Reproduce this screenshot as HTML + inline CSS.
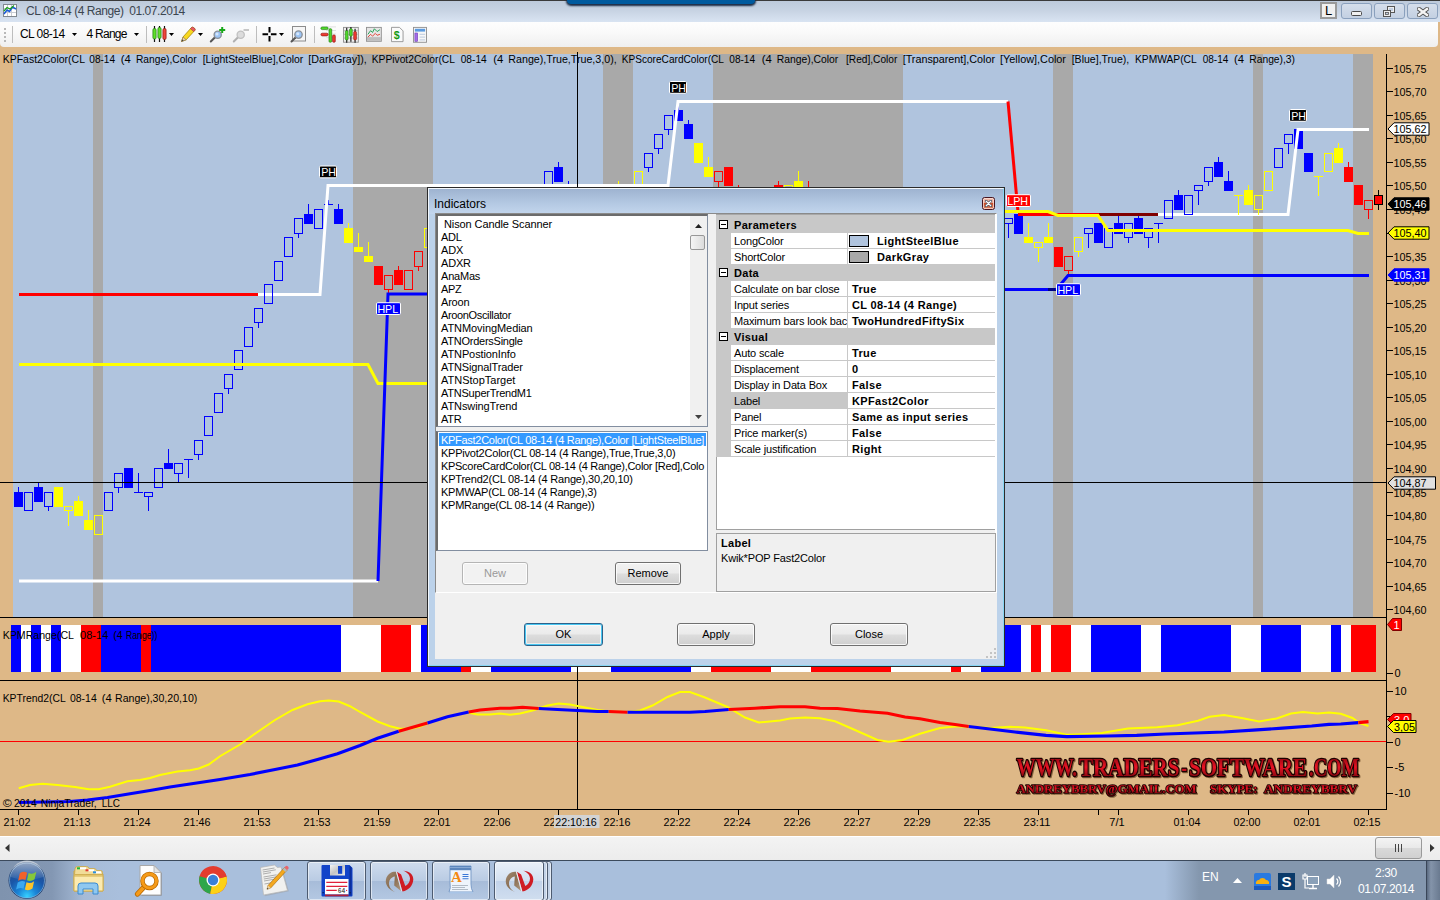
<!DOCTYPE html>
<html><head><meta charset="utf-8"><title>CL 08-14 (4 Range)</title>
<style>
html,body{margin:0;padding:0;overflow:hidden;}
body{width:1440px;height:900px;overflow:hidden;position:relative;background:#DEB887;font-family:"Liberation Sans",sans-serif;font-size:11px;color:#000;}
.abs{position:absolute;}
#titlebar{left:0;top:0;width:1440px;height:22px;background:linear-gradient(#bdcadb 0,#c7d3e3 45%,#d9e4f2 100%);border-top:1px solid #3a3a3a;box-sizing:border-box;}
#titlebar .t{position:absolute;left:26px;top:3px;font-size:12px;line-height:14px;color:#3c4650;white-space:pre;letter-spacing:-0.45px;}
#toolbar{left:0;top:22px;width:1438px;height:25px;background:linear-gradient(#fefefe 0,#f9f9f9 45%,#efefef 100%);border-radius:0 0 4px 4px;}
.tb{position:absolute;top:0;font-size:12px;line-height:24px;white-space:pre;}
.wb{position:absolute;top:1.500px;height:16.500px;border:1px solid #8aa0bd;border-radius:3px;background:linear-gradient(#d5deeb,#c3d0e2);box-sizing:border-box;}
/* dialog */
#dlg{left:427px;top:187px;width:578px;height:480px;box-sizing:border-box;border:1px solid #2b2b2b;background:#bcd2ea;}
#dlg .fr{position:absolute;left:0;top:0;right:0;height:26px;background:linear-gradient(#9db2cf 0,#b4c9e3 60%,#c3d6ed 100%);}
#dlg .title{position:absolute;left:6px;top:9px;font-size:12px;color:#000;}
#cl{position:absolute;left:7px;top:26px;width:562px;height:446px;background:#F0F0F0;}
.lb{position:absolute;background:#fff;border:1px solid #828790;box-sizing:border-box;border-top-color:#6d6d6d;border-left-color:#6d6d6d;}
.li{position:absolute;left:4px;white-space:pre;font-size:11px;line-height:13px;height:13px;}
.btn{position:absolute;box-sizing:border-box;border:1px solid #707070;border-radius:3px;background:linear-gradient(#f2f2f2 0,#ebebeb 48%,#dddddd 52%,#cfcfcf 100%);text-align:center;font-size:11px;line-height:21px;box-shadow:inset 0 0 0 1px rgba(255,255,255,.8);}
.row{position:absolute;left:0;width:279px;height:16px;}
.pn{position:absolute;left:15px;top:0;width:116px;height:15px;background:#fff;line-height:17px;padding-left:3px;letter-spacing:-0.15px;box-sizing:border-box;white-space:pre;overflow:hidden;}
.pv{position:absolute;left:132px;top:0;width:147px;height:15px;background:#fff;line-height:17px;font-weight:bold;padding-left:4px;letter-spacing:0.35px;box-sizing:border-box;white-space:pre;overflow:hidden;}
.cat{position:absolute;left:15px;top:0;line-height:17px;font-weight:bold;padding-left:3px;letter-spacing:0.3px;}
.pm{position:absolute;left:3px;top:3px;width:9px;height:9px;box-sizing:border-box;border:1px solid #000;background:#fff;}
.pm:after{content:"";position:absolute;left:1px;top:3px;width:5px;height:1px;background:#000;}
.sw{position:absolute;left:1px;top:2px;width:20px;height:12px;box-sizing:border-box;border:1px solid #000;}
#task{left:0;top:860px;width:1440px;height:40px;background:linear-gradient(90deg,#7f93ae 0,#8397b3 52px,#a6bbd7 84px,#a9bfdc 120px,#a9bfdc 100%);border-top:1px solid #3c4a5c;box-sizing:border-box;}
.tbtn{position:absolute;top:0px;height:40px;box-sizing:border-box;border:1px solid #4d5b70;border-radius:3px;background:linear-gradient(#cfdcee 0,#b9cbe3 50%,#a7bcd9 51%,#b4c8e2 100%);box-shadow:inset 0 0 0 1px rgba(255,255,255,.55);}
</style></head><body>
<div id="titlebar" class="abs">
<svg class="abs" style="left:3px;top:3px" width="15" height="14" viewBox="0 0 15 14"><rect x="0.5" y="0.5" width="13" height="12" fill="#fff" stroke="#808890"/><path d="M1 4.500h12M1 8.500h12M4.500 1v11M8.500 1v11" stroke="#c8ccd4" stroke-width="1"/><path d="M1 10 L4 6 L6.500 7.500 L9.500 3 L13 5" fill="none" stroke="#1a5ad8" stroke-width="1.500"/><path d="M1 7 L4 3.500 L7 5 L11 1.500" fill="none" stroke="#1aa01a" stroke-width="1.200"/></svg>
<div class="t">CL 08-14 (4 Range)  01.07.2014</div>
<div class="abs" style="left:567px;top:-1px;width:188px;height:4px;background:#005a9e;border-radius:0 0 4px 4px;box-shadow:0 1px 2px 1px #1a2a44;"></div>
<div class="abs" style="left:1320px;top:1px;width:17px;height:17px;box-sizing:border-box;border:2px solid #9a9a9a;background:#f0f0f0;font-size:13px;line-height:13px;text-align:center;">L</div>
<div class="wb" style="left:1341px;width:31px;"><div class="abs" style="left:9px;top:7.500px;width:11px;height:4.500px;border:1px solid #4a4a4a;background:#f0f0f0;border-radius:1.500px;box-sizing:border-box"></div></div>
<div class="wb" style="left:1374px;width:31px;"><svg class="abs" style="left:8px;top:2px" width="13" height="11" viewBox="0 0 13 11"><rect x="4.5" y="0.5" width="7" height="6" fill="#eee" stroke="#555"/><rect x="6" y="2" width="4" height="3" fill="#c3d0e2" stroke="none"/><rect x="0.5" y="4.5" width="7" height="6" fill="#eee" stroke="#555"/><rect x="2.5" y="6.5" width="3" height="2" fill="#c3d0e2" stroke="#555" stroke-width=".8"/></svg></div>
<div class="wb" style="left:1407px;width:31px;"><svg class="abs" style="left:9px;top:3px" width="12" height="10" viewBox="0 0 12 10"><path d="M2 2 L10 8 M10 2 L2 8" stroke="#505050" stroke-width="4.200" stroke-linecap="square"/><path d="M2 2 L10 8 M10 2 L2 8" stroke="#f4f4f4" stroke-width="2.400" stroke-linecap="square"/></svg></div>
</div>
<div id="toolbar" class="abs">
<div class="abs" style="left:4px;top:6px;width:2px;height:14px;background:repeating-linear-gradient(#b8b8b8 0,#b8b8b8 2px,transparent 2px,transparent 4px)"></div>
<div class="abs" style="left:12px;top:4px;width:1px;height:17px;background:#bdbdbd"></div>
<div class="tb" style="left:20px;letter-spacing:-0.55px">CL 08-14</div>
<svg class="abs" style="left:72px;top:11px" width="5" height="3"><path d="M0 0h5l-2.500 3z" fill="#000"/></svg>
<div class="tb" style="left:86.500px;letter-spacing:-0.73px">4 Range</div>
<svg class="abs" style="left:134.300px;top:11px" width="5" height="3"><path d="M0 0h5l-2.500 3z" fill="#000"/></svg>
<div class="abs" style="left:146px;top:4px;width:1px;height:17px;background:#bdbdbd"></div>
<!-- candle icon -->
<svg class="abs" style="left:152px;top:4px" width="15" height="16" viewBox="0 0 15 16"><path d="M2.500 0v16M7.500 0v16M12.500 0v16" stroke="#111" stroke-width="1.200"/><rect x="0.900" y="2.500" width="3.200" height="10.500" rx="1.400" fill="#5fe02a" stroke="#1e7a10" stroke-width=".7"/><rect x="5.900" y="1.500" width="3.200" height="11" rx="1.400" fill="#5fe02a" stroke="#1e7a10" stroke-width=".7"/><rect x="10.900" y="2.500" width="3.200" height="11" rx="1.400" fill="#f0463a" stroke="#8a1510" stroke-width=".7"/></svg>
<svg class="abs" style="left:169px;top:11px" width="5" height="3"><path d="M0 0h5l-2.500 3z" fill="#000"/></svg>
<!-- pencil -->
<svg class="abs" style="left:180px;top:4px" width="17" height="17" viewBox="0 0 17 17"><path d="M1.500 15.500 L3 11 L11.500 1.500 Q12.500 0.800 13.500 1.500 L14.800 2.600 Q15.500 3.500 14.800 4.400 L6.200 13.800 Z" fill="#f8d820" stroke="#9a7a00" stroke-width=".7"/><path d="M11.500 1.500 Q12.500 0.800 13.500 1.500 L14.800 2.600 Q15.500 3.500 14.800 4.400 L13.700 5.600 L10.400 2.700Z" fill="#e85a60" stroke="#903038" stroke-width=".5"/><path d="M1.500 15.500 L3 11 L6.200 13.800Z" fill="#e8d0a8" stroke="#806848" stroke-width=".5"/><path d="M1.500 15.500 L2.200 13.300 L3.700 14.700Z" fill="#444"/></svg>
<svg class="abs" style="left:198px;top:11px" width="5" height="3"><path d="M0 0h5l-2.500 3z" fill="#000"/></svg>
<!-- zoom in -->
<svg class="abs" style="left:209px;top:3px" width="20" height="20" viewBox="0 0 20 20"><path d="M1.800 16.500 L5.800 12.500" stroke="#555" stroke-width="2" stroke-linecap="round"/><circle cx="8.700" cy="9.800" r="3.600" fill="#9cc4f4" stroke="#8a9098" stroke-width="1.300"/><circle cx="8" cy="9" r="1.500" fill="#d4e6fb"/><path d="M13.200 2v6M10.200 5h6" stroke="#18a818" stroke-width="2"/></svg>
<svg class="abs" style="left:232px;top:3px" width="20" height="20" viewBox="0 0 20 20"><path d="M1.800 16.500 L5.800 12.500" stroke="#b0b0b0" stroke-width="2" stroke-linecap="round"/><circle cx="8.700" cy="9.800" r="3.600" fill="#dcdcdc" stroke="#c0c0c0" stroke-width="1.300"/><path d="M11.500 5h5.500" stroke="#c0c0c0" stroke-width="1.800"/></svg>
<div class="abs" style="left:256px;top:4px;width:1px;height:17px;background:#bdbdbd"></div>
<!-- crosshair -->
<svg class="abs" style="left:261.500px;top:5px" width="15" height="15" viewBox="0 0 15 15"><path d="M7.500 0v5.600M7.500 9v5.600M0.500 7.300h5.600M8.900 7.300h5.600" stroke="#000" stroke-width="2"/></svg>
<svg class="abs" style="left:279px;top:11px" width="5" height="3"><path d="M0 0h5l-2.500 3z" fill="#000"/></svg>
<svg class="abs" style="left:290px;top:3px" width="18" height="19" viewBox="0 0 18 19"><rect x="2.500" y="1.500" width="13" height="14.500" fill="#f6f6f6" stroke="#8c8c8c"/><path d="M1.500 16.500 L5.500 12.500" stroke="#555" stroke-width="2" stroke-linecap="round"/><circle cx="8.500" cy="9.600" r="3.700" fill="#9cc4f4" stroke="#8a9098" stroke-width="1.300"/><circle cx="7.800" cy="8.800" r="1.500" fill="#d4e6fb"/></svg>
<div class="abs" style="left:314px;top:4px;width:1px;height:17px;background:#bdbdbd"></div>
<svg class="abs" style="left:319.500px;top:3.500px" width="16.200" height="17.100" viewBox="0 0 18 19"><path d="M7 1h11M7 5h11M7 9h11M7 13h11" stroke="#ddd"/><rect x="1" y="1" width="8" height="3" rx="1.5" fill="#4fd62a" stroke="#1e7a10" stroke-width=".7"/><rect x="1" y="8" width="8" height="3" rx="1.5" fill="#ee3a30" stroke="#8a1510" stroke-width=".7"/><rect x="10" y="3" width="3" height="15" rx="1" fill="#4fd62a" stroke="#1e7a10" stroke-width=".7"/><rect x="14" y="10" width="3" height="8" rx="1" fill="#ee3a30" stroke="#8a1510" stroke-width=".7"/></svg>
<svg class="abs" style="left:343px;top:3.500px" width="15.800" height="17.600" viewBox="0 0 17 19"><rect x="0.5" y="1.5" width="16" height="16" fill="#f0f0f0" stroke="#909090"/><path d="M1 5h15M1 9h15M1 13h15" stroke="#bbb"/><path d="M4 2v16M8.500 1v16M13 3v15" stroke="#111" stroke-width="1.2"/><rect x="2.5" y="5" width="3" height="10" rx="1" fill="#4fd62a" stroke="#1e7a10" stroke-width=".6"/><rect x="7" y="3" width="3" height="8" rx="1" fill="#4fd62a" stroke="#1e7a10" stroke-width=".6"/><rect x="11.500" y="6" width="3" height="9" rx="1" fill="#ee3a30" stroke="#8a1510" stroke-width=".6"/></svg>
<svg class="abs" style="left:366px;top:3.500px" width="15.800" height="17.600" viewBox="0 0 17 19"><rect x="0.5" y="1.5" width="16" height="15" fill="#e6e6e6" stroke="#909090"/><rect x="1" y="12" width="15" height="4" fill="#bdbdbd"/><path d="M2 9 L5 5 L7 7 L9 3 L12 6 L15 4" fill="none" stroke="#1aa050" stroke-width="1"/><path d="M2 12 L5 9 L7 11 L10 8 L12 10 L15 9" fill="none" stroke="#e03a30" stroke-width="1"/></svg>
<svg class="abs" style="left:391px;top:4px" width="12.500" height="17" viewBox="0 0 14 19"><path d="M0.5 1.500h9l4 4v12h-13z" fill="#fafafa" stroke="#909090"/><text x="6.5" y="14" font-size="12" font-weight="bold" fill="#149a14" text-anchor="middle" font-family="Liberation Sans, sans-serif">$</text></svg>
<svg class="abs" style="left:413px;top:3.500px" width="14" height="17.700" viewBox="0 0 15 19"><rect x="0.5" y="1.5" width="14" height="16" fill="#f7f7f7" stroke="#909090"/><rect x="2" y="3" width="11" height="3" fill="#5b9be0"/><rect x="2" y="7.500" width="3" height="9" fill="#a46be8" stroke="#6a3ab0" stroke-width=".6"/><path d="M7 9h6M7 12h6M7 15h6" stroke="#c8d4e4" stroke-width="1.4"/></svg>
</div>
<svg id="chart" width="1440" height="900" viewBox="0 0 1440 900" style="position:absolute;left:0;top:0">
<g shape-rendering="crispEdges">
<rect x="13" y="54" width="1360" height="563" fill="#B0C4DE"/>
<rect x="93" y="54" width="10" height="563" fill="#A9A9A9"/>
<rect x="353" y="54" width="80" height="563" fill="#A9A9A9"/>
<rect x="603" y="54" width="30" height="563" fill="#A9A9A9"/>
<rect x="713" y="54" width="190" height="563" fill="#A9A9A9"/>
<rect x="1053" y="54" width="20" height="563" fill="#A9A9A9"/>
<rect x="1253" y="54" width="10" height="563" fill="#A9A9A9"/>
<rect x="1353" y="54" width="20" height="563" fill="#A9A9A9"/>
<rect x="0" y="617" width="1386" height="1" fill="#000"/>
<rect x="0" y="680" width="1386" height="1" fill="#000"/>
<rect x="0" y="809" width="1386" height="1" fill="#000"/>
<rect x="1386" y="54" width="1" height="756" fill="#000"/>
</g>
<g shape-rendering="crispEdges">
<rect x="11" y="625" width="10" height="47" fill="#0000FF"/>
<rect x="21" y="625" width="10" height="47" fill="#FFFFFF"/>
<rect x="31" y="625" width="10" height="47" fill="#0000FF"/>
<rect x="41" y="625" width="10" height="47" fill="#FFFFFF"/>
<rect x="51" y="625" width="10" height="47" fill="#0000FF"/>
<rect x="61" y="625" width="20" height="47" fill="#FFFFFF"/>
<rect x="81" y="625" width="20" height="47" fill="#FF0000"/>
<rect x="101" y="625" width="40" height="47" fill="#0000FF"/>
<rect x="141" y="625" width="10" height="47" fill="#FF0000"/>
<rect x="151" y="625" width="190" height="47" fill="#0000FF"/>
<rect x="341" y="625" width="40" height="47" fill="#FFFFFF"/>
<rect x="381" y="625" width="30" height="47" fill="#FF0000"/>
<rect x="411" y="625" width="10" height="47" fill="#FFFFFF"/>
<rect x="421" y="625" width="40" height="47" fill="#0000FF"/>
<rect x="461" y="625" width="10" height="47" fill="#FF0000"/>
<rect x="471" y="625" width="20" height="47" fill="#FFFFFF"/>
<rect x="491" y="625" width="80" height="47" fill="#0000FF"/>
<rect x="571" y="625" width="40" height="47" fill="#FFFFFF"/>
<rect x="611" y="625" width="80" height="47" fill="#0000FF"/>
<rect x="691" y="625" width="20" height="47" fill="#FFFFFF"/>
<rect x="711" y="625" width="60" height="47" fill="#FF0000"/>
<rect x="771" y="625" width="40" height="47" fill="#FFFFFF"/>
<rect x="811" y="625" width="80" height="47" fill="#FF0000"/>
<rect x="891" y="625" width="60" height="47" fill="#FFFFFF"/>
<rect x="951" y="625" width="10" height="47" fill="#FF0000"/>
<rect x="961" y="625" width="20" height="47" fill="#FFFFFF"/>
<rect x="981" y="625" width="40" height="47" fill="#0000FF"/>
<rect x="1021" y="625" width="10" height="47" fill="#FFFFFF"/>
<rect x="1031" y="625" width="10" height="47" fill="#FF0000"/>
<rect x="1041" y="625" width="10" height="47" fill="#FFFFFF"/>
<rect x="1051" y="625" width="20" height="47" fill="#FF0000"/>
<rect x="1071" y="625" width="20" height="47" fill="#FFFFFF"/>
<rect x="1091" y="625" width="50" height="47" fill="#0000FF"/>
<rect x="1141" y="625" width="20" height="47" fill="#FFFFFF"/>
<rect x="1161" y="625" width="70" height="47" fill="#0000FF"/>
<rect x="1231" y="625" width="30" height="47" fill="#FFFFFF"/>
<rect x="1261" y="625" width="40" height="47" fill="#0000FF"/>
<rect x="1301" y="625" width="30" height="47" fill="#FFFFFF"/>
<rect x="1331" y="625" width="10" height="47" fill="#0000FF"/>
<rect x="1341" y="625" width="10" height="47" fill="#FFFFFF"/>
<rect x="1351" y="625" width="25" height="47" fill="#FF0000"/>
</g>
<polyline points="19,294.5 258,294.5" fill="none" stroke="#FF0000" stroke-width="3" stroke-linejoin="miter" />
<polyline points="258,294.5 320.6,294.5" fill="none" stroke="#FFFFFF" stroke-width="3" stroke-linejoin="miter" />
<polyline points="19,581 378,581" fill="none" stroke="#FFFFFF" stroke-width="3" stroke-linejoin="miter" />
<polyline points="1158,214.5 1288.5,214.5" fill="none" stroke="#FFFFFF" stroke-width="3" stroke-linejoin="miter" />
<g shape-rendering="crispEdges">
<rect x="18" y="487" width="1" height="5" fill="#0000FF"/>
<rect x="14" y="492" width="9" height="15" fill="#0000FF"/>
<rect x="24" y="492" width="9" height="1" fill="#0000FF"/>
<rect x="24" y="510" width="9" height="1" fill="#0000FF"/>
<rect x="24" y="492" width="1" height="19" fill="#0000FF"/>
<rect x="32" y="492" width="1" height="19" fill="#0000FF"/>
<rect x="38" y="482" width="1" height="5" fill="#0000FF"/>
<rect x="34" y="487" width="9" height="15" fill="#0000FF"/>
<rect x="48" y="507" width="1" height="4" fill="#0000FF"/>
<rect x="44" y="492" width="9" height="1" fill="#0000FF"/>
<rect x="44" y="506" width="9" height="1" fill="#0000FF"/>
<rect x="44" y="492" width="1" height="15" fill="#0000FF"/>
<rect x="52" y="492" width="1" height="15" fill="#0000FF"/>
<rect x="54" y="487" width="9" height="20" fill="#FFFF00"/>
<rect x="68" y="511" width="1" height="15" fill="#FFFF00"/>
<rect x="64" y="506" width="9" height="1" fill="#FFFF00"/>
<rect x="64" y="510" width="9" height="1" fill="#FFFF00"/>
<rect x="64" y="506" width="1" height="5" fill="#FFFF00"/>
<rect x="72" y="506" width="1" height="5" fill="#FFFF00"/>
<rect x="78" y="496" width="1" height="5" fill="#FFFF00"/>
<rect x="74" y="501" width="9" height="15" fill="#FFFF00"/>
<rect x="88" y="510" width="1" height="10" fill="#FFFF00"/>
<rect x="84" y="520" width="9" height="10" fill="#FFFF00"/>
<rect x="94" y="515" width="9" height="1" fill="#FFFF00"/>
<rect x="94" y="534" width="9" height="1" fill="#FFFF00"/>
<rect x="94" y="515" width="1" height="20" fill="#FFFF00"/>
<rect x="102" y="515" width="1" height="20" fill="#FFFF00"/>
<rect x="104" y="492" width="9" height="1" fill="#0000FF"/>
<rect x="104" y="510" width="9" height="1" fill="#0000FF"/>
<rect x="104" y="492" width="1" height="19" fill="#0000FF"/>
<rect x="112" y="492" width="1" height="19" fill="#0000FF"/>
<rect x="118" y="488" width="1" height="5" fill="#0000FF"/>
<rect x="114" y="473" width="9" height="1" fill="#0000FF"/>
<rect x="114" y="487" width="9" height="1" fill="#0000FF"/>
<rect x="114" y="473" width="1" height="15" fill="#0000FF"/>
<rect x="122" y="473" width="1" height="15" fill="#0000FF"/>
<rect x="124" y="468" width="9" height="20" fill="#0000FF"/>
<rect x="138" y="473" width="1" height="19" fill="#0000FF"/>
<rect x="134" y="492" width="9" height="1" fill="#0000FF"/>
<rect x="148" y="497" width="1" height="14" fill="#0000FF"/>
<rect x="144" y="492" width="9" height="1" fill="#0000FF"/>
<rect x="144" y="496" width="9" height="1" fill="#0000FF"/>
<rect x="144" y="492" width="1" height="5" fill="#0000FF"/>
<rect x="152" y="492" width="1" height="5" fill="#0000FF"/>
<rect x="154" y="468" width="9" height="1" fill="#0000FF"/>
<rect x="154" y="487" width="9" height="1" fill="#0000FF"/>
<rect x="154" y="468" width="1" height="20" fill="#0000FF"/>
<rect x="162" y="468" width="1" height="20" fill="#0000FF"/>
<rect x="168" y="449" width="1" height="14" fill="#0000FF"/>
<rect x="164" y="463" width="9" height="6" fill="#0000FF"/>
<rect x="178" y="474" width="1" height="9" fill="#0000FF"/>
<rect x="174" y="463" width="9" height="1" fill="#0000FF"/>
<rect x="174" y="473" width="9" height="1" fill="#0000FF"/>
<rect x="174" y="463" width="1" height="11" fill="#0000FF"/>
<rect x="182" y="463" width="1" height="11" fill="#0000FF"/>
<rect x="188" y="460" width="1" height="18" fill="#0000FF"/>
<rect x="184" y="459" width="9" height="1" fill="#0000FF"/>
<rect x="198" y="455" width="1" height="5" fill="#0000FF"/>
<rect x="194" y="440" width="9" height="1" fill="#0000FF"/>
<rect x="194" y="454" width="9" height="1" fill="#0000FF"/>
<rect x="194" y="440" width="1" height="15" fill="#0000FF"/>
<rect x="202" y="440" width="1" height="15" fill="#0000FF"/>
<rect x="204" y="416" width="9" height="1" fill="#0000FF"/>
<rect x="204" y="435" width="9" height="1" fill="#0000FF"/>
<rect x="204" y="416" width="1" height="20" fill="#0000FF"/>
<rect x="212" y="416" width="1" height="20" fill="#0000FF"/>
<rect x="214" y="393" width="9" height="1" fill="#0000FF"/>
<rect x="214" y="412" width="9" height="1" fill="#0000FF"/>
<rect x="214" y="393" width="1" height="20" fill="#0000FF"/>
<rect x="222" y="393" width="1" height="20" fill="#0000FF"/>
<rect x="228" y="389" width="1" height="5" fill="#0000FF"/>
<rect x="224" y="374" width="9" height="1" fill="#0000FF"/>
<rect x="224" y="388" width="9" height="1" fill="#0000FF"/>
<rect x="224" y="374" width="1" height="15" fill="#0000FF"/>
<rect x="232" y="374" width="1" height="15" fill="#0000FF"/>
<rect x="234" y="350" width="9" height="1" fill="#0000FF"/>
<rect x="234" y="369" width="9" height="1" fill="#0000FF"/>
<rect x="234" y="350" width="1" height="20" fill="#0000FF"/>
<rect x="242" y="350" width="1" height="20" fill="#0000FF"/>
<rect x="244" y="327" width="9" height="1" fill="#0000FF"/>
<rect x="244" y="346" width="9" height="1" fill="#0000FF"/>
<rect x="244" y="327" width="1" height="20" fill="#0000FF"/>
<rect x="252" y="327" width="1" height="20" fill="#0000FF"/>
<rect x="258" y="323" width="1" height="5" fill="#0000FF"/>
<rect x="254" y="308" width="9" height="1" fill="#0000FF"/>
<rect x="254" y="322" width="9" height="1" fill="#0000FF"/>
<rect x="254" y="308" width="1" height="15" fill="#0000FF"/>
<rect x="262" y="308" width="1" height="15" fill="#0000FF"/>
<rect x="264" y="284" width="9" height="1" fill="#0000FF"/>
<rect x="264" y="303" width="9" height="1" fill="#0000FF"/>
<rect x="264" y="284" width="1" height="20" fill="#0000FF"/>
<rect x="272" y="284" width="1" height="20" fill="#0000FF"/>
<rect x="274" y="261" width="9" height="1" fill="#0000FF"/>
<rect x="274" y="280" width="9" height="1" fill="#0000FF"/>
<rect x="274" y="261" width="1" height="20" fill="#0000FF"/>
<rect x="282" y="261" width="1" height="20" fill="#0000FF"/>
<rect x="284" y="237" width="9" height="1" fill="#0000FF"/>
<rect x="284" y="256" width="9" height="1" fill="#0000FF"/>
<rect x="284" y="237" width="1" height="20" fill="#0000FF"/>
<rect x="292" y="237" width="1" height="20" fill="#0000FF"/>
<rect x="298" y="234" width="1" height="4" fill="#0000FF"/>
<rect x="294" y="218" width="9" height="1" fill="#0000FF"/>
<rect x="294" y="233" width="9" height="1" fill="#0000FF"/>
<rect x="294" y="218" width="1" height="16" fill="#0000FF"/>
<rect x="302" y="218" width="1" height="16" fill="#0000FF"/>
<rect x="308" y="204" width="1" height="10" fill="#0000FF"/>
<rect x="304" y="214" width="9" height="10" fill="#0000FF"/>
<rect x="314" y="209" width="9" height="1" fill="#0000FF"/>
<rect x="314" y="228" width="9" height="1" fill="#0000FF"/>
<rect x="314" y="209" width="1" height="20" fill="#0000FF"/>
<rect x="322" y="209" width="1" height="20" fill="#0000FF"/>
<rect x="328" y="200" width="1" height="4" fill="#0000FF"/>
<rect x="324" y="204" width="9" height="1" fill="#0000FF"/>
<rect x="338" y="204" width="1" height="5" fill="#0000FF"/>
<rect x="334" y="209" width="9" height="15" fill="#0000FF"/>
<rect x="348" y="223" width="1" height="5" fill="#FFFF00"/>
<rect x="344" y="228" width="9" height="15" fill="#FFFF00"/>
<rect x="358" y="233" width="1" height="14" fill="#FFFF00"/>
<rect x="354" y="247" width="9" height="5" fill="#FFFF00"/>
<rect x="368" y="242" width="1" height="14" fill="#FFFF00"/>
<rect x="364" y="256" width="9" height="6" fill="#FFFF00"/>
<rect x="374" y="266" width="9" height="19" fill="#FF0000"/>
<rect x="388" y="290" width="1" height="5" fill="#FF0000"/>
<rect x="384" y="275" width="9" height="1" fill="#FF0000"/>
<rect x="384" y="289" width="9" height="1" fill="#FF0000"/>
<rect x="384" y="275" width="1" height="15" fill="#FF0000"/>
<rect x="392" y="275" width="1" height="15" fill="#FF0000"/>
<rect x="398" y="266" width="1" height="4" fill="#FF0000"/>
<rect x="394" y="270" width="9" height="15" fill="#FF0000"/>
<rect x="404" y="270" width="9" height="1" fill="#FF0000"/>
<rect x="404" y="289" width="9" height="1" fill="#FF0000"/>
<rect x="404" y="270" width="1" height="20" fill="#FF0000"/>
<rect x="412" y="270" width="1" height="20" fill="#FF0000"/>
<rect x="418" y="267" width="1" height="4" fill="#FF0000"/>
<rect x="414" y="251" width="9" height="1" fill="#FF0000"/>
<rect x="414" y="266" width="9" height="1" fill="#FF0000"/>
<rect x="414" y="251" width="1" height="16" fill="#FF0000"/>
<rect x="422" y="251" width="1" height="16" fill="#FF0000"/>
<rect x="424" y="228" width="9" height="1" fill="#FFFF00"/>
<rect x="424" y="247" width="9" height="1" fill="#FFFF00"/>
<rect x="424" y="228" width="1" height="20" fill="#FFFF00"/>
<rect x="432" y="228" width="1" height="20" fill="#FFFF00"/>
<rect x="544" y="171" width="9" height="1" fill="#0000FF"/>
<rect x="544" y="190" width="9" height="1" fill="#0000FF"/>
<rect x="544" y="171" width="1" height="20" fill="#0000FF"/>
<rect x="552" y="171" width="1" height="20" fill="#0000FF"/>
<rect x="558" y="162" width="1" height="5" fill="#0000FF"/>
<rect x="554" y="167" width="9" height="15" fill="#0000FF"/>
<rect x="568" y="181" width="1" height="9" fill="#0000FF"/>
<rect x="564" y="190" width="9" height="11" fill="#0000FF"/>
<rect x="618" y="181" width="1" height="9" fill="#FFFF00"/>
<rect x="614" y="190" width="9" height="11" fill="#FFFF00"/>
<rect x="634" y="171" width="9" height="1" fill="#FFFF00"/>
<rect x="634" y="190" width="9" height="1" fill="#FFFF00"/>
<rect x="634" y="171" width="1" height="20" fill="#FFFF00"/>
<rect x="642" y="171" width="1" height="20" fill="#FFFF00"/>
<rect x="648" y="168" width="1" height="4" fill="#0000FF"/>
<rect x="644" y="153" width="9" height="1" fill="#0000FF"/>
<rect x="644" y="167" width="9" height="1" fill="#0000FF"/>
<rect x="644" y="153" width="1" height="15" fill="#0000FF"/>
<rect x="652" y="153" width="1" height="15" fill="#0000FF"/>
<rect x="658" y="149" width="1" height="5" fill="#0000FF"/>
<rect x="654" y="134" width="9" height="1" fill="#0000FF"/>
<rect x="654" y="148" width="9" height="1" fill="#0000FF"/>
<rect x="654" y="134" width="1" height="15" fill="#0000FF"/>
<rect x="662" y="134" width="1" height="15" fill="#0000FF"/>
<rect x="668" y="130" width="1" height="5" fill="#0000FF"/>
<rect x="664" y="115" width="9" height="1" fill="#0000FF"/>
<rect x="664" y="129" width="9" height="1" fill="#0000FF"/>
<rect x="664" y="115" width="1" height="15" fill="#0000FF"/>
<rect x="672" y="115" width="1" height="15" fill="#0000FF"/>
<rect x="678" y="101" width="1" height="9" fill="#0000FF"/>
<rect x="674" y="110" width="9" height="11" fill="#0000FF"/>
<rect x="688" y="120" width="1" height="4" fill="#0000FF"/>
<rect x="684" y="124" width="9" height="15" fill="#0000FF"/>
<rect x="694" y="143" width="9" height="20" fill="#FFFF00"/>
<rect x="708" y="157" width="1" height="10" fill="#FFFF00"/>
<rect x="704" y="167" width="9" height="10" fill="#FFFF00"/>
<rect x="718" y="182" width="1" height="9" fill="#FF0000"/>
<rect x="714" y="171" width="9" height="1" fill="#FF0000"/>
<rect x="714" y="181" width="9" height="1" fill="#FF0000"/>
<rect x="714" y="171" width="1" height="11" fill="#FF0000"/>
<rect x="722" y="171" width="1" height="11" fill="#FF0000"/>
<rect x="724" y="167" width="9" height="19" fill="#FF0000"/>
<rect x="738" y="185" width="1" height="5" fill="#FF0000"/>
<rect x="734" y="190" width="9" height="15" fill="#FF0000"/>
<rect x="778" y="181" width="1" height="4" fill="#FF0000"/>
<rect x="774" y="185" width="9" height="16" fill="#FF0000"/>
<rect x="784" y="185" width="9" height="1" fill="#FFFF00"/>
<rect x="784" y="204" width="9" height="1" fill="#FFFF00"/>
<rect x="784" y="185" width="1" height="20" fill="#FFFF00"/>
<rect x="792" y="185" width="1" height="20" fill="#FFFF00"/>
<rect x="798" y="171" width="1" height="10" fill="#FFFF00"/>
<rect x="794" y="181" width="9" height="10" fill="#FFFF00"/>
<rect x="808" y="181" width="1" height="9" fill="#FF0000"/>
<rect x="804" y="190" width="9" height="11" fill="#FF0000"/>
<rect x="1008" y="224" width="1" height="14" fill="#0000FF"/>
<rect x="1004" y="218" width="9" height="1" fill="#0000FF"/>
<rect x="1004" y="223" width="9" height="1" fill="#0000FF"/>
<rect x="1004" y="218" width="1" height="6" fill="#0000FF"/>
<rect x="1012" y="218" width="1" height="6" fill="#0000FF"/>
<rect x="1014" y="214" width="9" height="20" fill="#0000FF"/>
<rect x="1028" y="223" width="1" height="14" fill="#FFFF00"/>
<rect x="1024" y="237" width="9" height="6" fill="#FFFF00"/>
<rect x="1038" y="248" width="1" height="14" fill="#FFFF00"/>
<rect x="1034" y="242" width="9" height="1" fill="#FFFF00"/>
<rect x="1034" y="247" width="9" height="1" fill="#FFFF00"/>
<rect x="1034" y="242" width="1" height="6" fill="#FFFF00"/>
<rect x="1042" y="242" width="1" height="6" fill="#FFFF00"/>
<rect x="1048" y="223" width="1" height="14" fill="#FFFF00"/>
<rect x="1044" y="237" width="9" height="6" fill="#FFFF00"/>
<rect x="1054" y="247" width="9" height="20" fill="#FF0000"/>
<rect x="1068" y="271" width="1" height="5" fill="#FF0000"/>
<rect x="1064" y="256" width="9" height="1" fill="#FF0000"/>
<rect x="1064" y="270" width="9" height="1" fill="#FF0000"/>
<rect x="1064" y="256" width="1" height="15" fill="#FF0000"/>
<rect x="1072" y="256" width="1" height="15" fill="#FF0000"/>
<rect x="1078" y="252" width="1" height="5" fill="#FFFF00"/>
<rect x="1074" y="237" width="9" height="1" fill="#FFFF00"/>
<rect x="1074" y="251" width="9" height="1" fill="#FFFF00"/>
<rect x="1074" y="237" width="1" height="15" fill="#FFFF00"/>
<rect x="1082" y="237" width="1" height="15" fill="#FFFF00"/>
<rect x="1088" y="234" width="1" height="14" fill="#0000FF"/>
<rect x="1084" y="228" width="9" height="1" fill="#0000FF"/>
<rect x="1084" y="233" width="9" height="1" fill="#0000FF"/>
<rect x="1084" y="228" width="1" height="6" fill="#0000FF"/>
<rect x="1092" y="228" width="1" height="6" fill="#0000FF"/>
<rect x="1094" y="223" width="9" height="20" fill="#0000FF"/>
<rect x="1104" y="228" width="9" height="1" fill="#0000FF"/>
<rect x="1104" y="247" width="9" height="1" fill="#0000FF"/>
<rect x="1104" y="228" width="1" height="20" fill="#0000FF"/>
<rect x="1112" y="228" width="1" height="20" fill="#0000FF"/>
<rect x="1118" y="214" width="1" height="9" fill="#0000FF"/>
<rect x="1114" y="223" width="9" height="11" fill="#0000FF"/>
<rect x="1128" y="238" width="1" height="5" fill="#0000FF"/>
<rect x="1124" y="223" width="9" height="1" fill="#0000FF"/>
<rect x="1124" y="237" width="9" height="1" fill="#0000FF"/>
<rect x="1124" y="223" width="1" height="15" fill="#0000FF"/>
<rect x="1132" y="223" width="1" height="15" fill="#0000FF"/>
<rect x="1138" y="214" width="1" height="4" fill="#0000FF"/>
<rect x="1134" y="218" width="9" height="16" fill="#0000FF"/>
<rect x="1148" y="238" width="1" height="10" fill="#0000FF"/>
<rect x="1144" y="228" width="9" height="1" fill="#0000FF"/>
<rect x="1144" y="237" width="9" height="1" fill="#0000FF"/>
<rect x="1144" y="228" width="1" height="10" fill="#0000FF"/>
<rect x="1152" y="228" width="1" height="10" fill="#0000FF"/>
<rect x="1158" y="224" width="1" height="19" fill="#0000FF"/>
<rect x="1154" y="223" width="9" height="1" fill="#0000FF"/>
<rect x="1164" y="200" width="9" height="1" fill="#0000FF"/>
<rect x="1164" y="218" width="9" height="1" fill="#0000FF"/>
<rect x="1164" y="200" width="1" height="19" fill="#0000FF"/>
<rect x="1172" y="200" width="1" height="19" fill="#0000FF"/>
<rect x="1178" y="190" width="1" height="5" fill="#0000FF"/>
<rect x="1174" y="195" width="9" height="15" fill="#0000FF"/>
<rect x="1184" y="195" width="9" height="1" fill="#0000FF"/>
<rect x="1184" y="214" width="9" height="1" fill="#0000FF"/>
<rect x="1184" y="195" width="1" height="20" fill="#0000FF"/>
<rect x="1192" y="195" width="1" height="20" fill="#0000FF"/>
<rect x="1198" y="191" width="1" height="14" fill="#0000FF"/>
<rect x="1194" y="185" width="9" height="1" fill="#0000FF"/>
<rect x="1194" y="190" width="9" height="1" fill="#0000FF"/>
<rect x="1194" y="185" width="1" height="6" fill="#0000FF"/>
<rect x="1202" y="185" width="1" height="6" fill="#0000FF"/>
<rect x="1208" y="182" width="1" height="4" fill="#0000FF"/>
<rect x="1204" y="167" width="9" height="1" fill="#0000FF"/>
<rect x="1204" y="181" width="9" height="1" fill="#0000FF"/>
<rect x="1204" y="167" width="1" height="15" fill="#0000FF"/>
<rect x="1212" y="167" width="1" height="15" fill="#0000FF"/>
<rect x="1218" y="157" width="1" height="5" fill="#0000FF"/>
<rect x="1214" y="162" width="9" height="15" fill="#0000FF"/>
<rect x="1228" y="171" width="1" height="10" fill="#0000FF"/>
<rect x="1224" y="181" width="9" height="10" fill="#0000FF"/>
<rect x="1238" y="196" width="1" height="19" fill="#FFFF00"/>
<rect x="1234" y="195" width="9" height="1" fill="#FFFF00"/>
<rect x="1248" y="185" width="1" height="5" fill="#FFFF00"/>
<rect x="1244" y="190" width="9" height="15" fill="#FFFF00"/>
<rect x="1258" y="210" width="1" height="5" fill="#FFFF00"/>
<rect x="1254" y="195" width="9" height="1" fill="#FFFF00"/>
<rect x="1254" y="209" width="9" height="1" fill="#FFFF00"/>
<rect x="1254" y="195" width="1" height="15" fill="#FFFF00"/>
<rect x="1262" y="195" width="1" height="15" fill="#FFFF00"/>
<rect x="1264" y="171" width="9" height="1" fill="#FFFF00"/>
<rect x="1264" y="190" width="9" height="1" fill="#FFFF00"/>
<rect x="1264" y="171" width="1" height="20" fill="#FFFF00"/>
<rect x="1272" y="171" width="1" height="20" fill="#FFFF00"/>
<rect x="1274" y="148" width="9" height="1" fill="#0000FF"/>
<rect x="1274" y="167" width="9" height="1" fill="#0000FF"/>
<rect x="1274" y="148" width="1" height="20" fill="#0000FF"/>
<rect x="1282" y="148" width="1" height="20" fill="#0000FF"/>
<rect x="1288" y="144" width="1" height="10" fill="#0000FF"/>
<rect x="1284" y="134" width="9" height="1" fill="#0000FF"/>
<rect x="1284" y="143" width="9" height="1" fill="#0000FF"/>
<rect x="1284" y="134" width="1" height="10" fill="#0000FF"/>
<rect x="1292" y="134" width="1" height="10" fill="#0000FF"/>
<rect x="1294" y="129" width="9" height="20" fill="#0000FF"/>
<rect x="1304" y="153" width="9" height="19" fill="#0000FF"/>
<rect x="1318" y="177" width="1" height="19" fill="#FFFF00"/>
<rect x="1314" y="176" width="9" height="1" fill="#FFFF00"/>
<rect x="1324" y="153" width="9" height="1" fill="#FFFF00"/>
<rect x="1324" y="171" width="9" height="1" fill="#FFFF00"/>
<rect x="1324" y="153" width="1" height="19" fill="#FFFF00"/>
<rect x="1332" y="153" width="1" height="19" fill="#FFFF00"/>
<rect x="1338" y="143" width="1" height="5" fill="#FFFF00"/>
<rect x="1334" y="148" width="9" height="15" fill="#FFFF00"/>
<rect x="1348" y="162" width="1" height="5" fill="#FF0000"/>
<rect x="1344" y="167" width="9" height="15" fill="#FF0000"/>
<rect x="1354" y="185" width="9" height="20" fill="#FF0000"/>
<rect x="1368" y="210" width="1" height="9" fill="#FF0000"/>
<rect x="1364" y="200" width="9" height="1" fill="#FF0000"/>
<rect x="1364" y="209" width="9" height="1" fill="#FF0000"/>
<rect x="1364" y="200" width="1" height="10" fill="#FF0000"/>
<rect x="1372" y="200" width="1" height="10" fill="#FF0000"/>
<rect x="1378" y="190" width="1" height="5" fill="#000"/>
<rect x="1378" y="205" width="1" height="5" fill="#000"/>
<rect x="1374" y="195" width="9" height="10" fill="#000"/>
<rect x="1375" y="196" width="7" height="8" fill="#FF0000"/>
</g>
<polyline points="319,294.5 320,294.5 328,185.5 668,185.5 678,101.5 1008,101.5" fill="none" stroke="#FFFFFF" stroke-width="3" stroke-linejoin="miter" />
<polyline points="1008,101.5 1018,212" fill="none" stroke="#FF0000" stroke-width="3" stroke-linejoin="miter" />
<polyline points="19,364.5 368,364.5 378,383.5 440,383.5" fill="none" stroke="#FFFF00" stroke-width="3" stroke-linejoin="miter" />
<polyline points="378,581 388,294 1004,294" fill="none" stroke="#0000FF" stroke-width="3" stroke-linejoin="miter" />
<polyline points="1000,289.5 1048,289.5" fill="none" stroke="#0000FF" stroke-width="3" stroke-linejoin="miter" />
<polyline points="1048,289.5 1058,289.5" fill="none" stroke="#000080" stroke-width="3" stroke-linejoin="miter" />
<polyline points="1056,290 1068,275.5 1369,275.5" fill="none" stroke="#0000FF" stroke-width="3" stroke-linejoin="miter" />
<polyline points="1018,214.5 1099,214.5" fill="none" stroke="#FF0000" stroke-width="3" stroke-linejoin="miter" />
<polyline points="1099,214.5 1158,214.5" fill="none" stroke="#800000" stroke-width="3" stroke-linejoin="miter" />
<polyline points="1287,214.5 1288,214.5 1298,129.5 1369,129.5" fill="none" stroke="#FFFFFF" stroke-width="3" stroke-linejoin="miter" />
<polyline points="1000,211.5 1048,211.5 1058,215.5 1098,215.5 1108,230.5 1348,230.5 1358,233.5 1369,233.5" fill="none" stroke="#FFFF00" stroke-width="3" stroke-linejoin="miter" />
<g shape-rendering="crispEdges">
<rect x="0" y="482" width="1386" height="1" fill="#000"/>
<rect x="577" y="52" width="1" height="757" fill="#000"/>
</g>
<rect x="319.5" y="166.0" width="17" height="11.8" rx="1.2" fill="#000" stroke="#fff" stroke-width="1"/>
<text x="321.2" y="176.1" font-size="10.7" fill="#fff" font-family="Liberation Sans, sans-serif">PH</text>
<rect x="669.5" y="81.5" width="17" height="11.8" rx="1.2" fill="#000" stroke="#fff" stroke-width="1"/>
<text x="671.2" y="91.6" font-size="10.7" fill="#fff" font-family="Liberation Sans, sans-serif">PH</text>
<rect x="1289.5" y="109.5" width="17" height="11.8" rx="1.2" fill="#000" stroke="#fff" stroke-width="1"/>
<text x="1291.2" y="119.6" font-size="10.7" fill="#fff" font-family="Liberation Sans, sans-serif">PH</text>
<rect x="376.5" y="302.7" width="24" height="11.8" rx="1.2" fill="#0000FF" stroke="#fff" stroke-width="1"/>
<text x="377.4" y="312.8" font-size="10.7" fill="#fff" font-family="Liberation Sans, sans-serif">HPL</text>
<rect x="1056.5" y="283.7" width="24" height="11.8" rx="1.2" fill="#0000FF" stroke="#fff" stroke-width="1"/>
<text x="1057.4" y="293.8" font-size="10.7" fill="#fff" font-family="Liberation Sans, sans-serif">HPL</text>
<rect x="1006.5" y="194.7" width="24" height="11.8" rx="1.2" fill="#FF0000" stroke="#fff" stroke-width="1"/>
<text x="1007.2" y="204.79999999999998" font-size="10.7" fill="#fff" font-family="Liberation Sans, sans-serif">LPH</text>
<g shape-rendering="crispEdges">
<rect x="1386" y="68" width="7" height="1" fill="#000"/>
<rect x="1386" y="91" width="7" height="1" fill="#000"/>
<rect x="1386" y="115" width="7" height="1" fill="#000"/>
<rect x="1386" y="138" width="7" height="1" fill="#000"/>
<rect x="1386" y="162" width="7" height="1" fill="#000"/>
<rect x="1386" y="185" width="7" height="1" fill="#000"/>
<rect x="1386" y="209" width="7" height="1" fill="#000"/>
<rect x="1386" y="233" width="7" height="1" fill="#000"/>
<rect x="1386" y="256" width="7" height="1" fill="#000"/>
<rect x="1386" y="280" width="7" height="1" fill="#000"/>
<rect x="1386" y="303" width="7" height="1" fill="#000"/>
<rect x="1386" y="327" width="7" height="1" fill="#000"/>
<rect x="1386" y="350" width="7" height="1" fill="#000"/>
<rect x="1386" y="374" width="7" height="1" fill="#000"/>
<rect x="1386" y="397" width="7" height="1" fill="#000"/>
<rect x="1386" y="421" width="7" height="1" fill="#000"/>
<rect x="1386" y="444" width="7" height="1" fill="#000"/>
<rect x="1386" y="468" width="7" height="1" fill="#000"/>
<rect x="1386" y="492" width="7" height="1" fill="#000"/>
<rect x="1386" y="515" width="7" height="1" fill="#000"/>
<rect x="1386" y="539" width="7" height="1" fill="#000"/>
<rect x="1386" y="562" width="7" height="1" fill="#000"/>
<rect x="1386" y="586" width="7" height="1" fill="#000"/>
<rect x="1386" y="609" width="7" height="1" fill="#000"/>
</g>
<g font-family="Liberation Sans, sans-serif" font-size="11" fill="#000">
<text x="1393.4" y="73" textLength="33" lengthAdjust="spacingAndGlyphs">105,75</text>
<text x="1393.4" y="96" textLength="33" lengthAdjust="spacingAndGlyphs">105,70</text>
<text x="1393.4" y="120" textLength="33" lengthAdjust="spacingAndGlyphs">105,65</text>
<text x="1393.4" y="143" textLength="33" lengthAdjust="spacingAndGlyphs">105,60</text>
<text x="1393.4" y="167" textLength="33" lengthAdjust="spacingAndGlyphs">105,55</text>
<text x="1393.4" y="190" textLength="33" lengthAdjust="spacingAndGlyphs">105,50</text>
<text x="1393.4" y="214" textLength="33" lengthAdjust="spacingAndGlyphs">105,45</text>
<text x="1393.4" y="238" textLength="33" lengthAdjust="spacingAndGlyphs">105,40</text>
<text x="1393.4" y="261" textLength="33" lengthAdjust="spacingAndGlyphs">105,35</text>
<text x="1393.4" y="285" textLength="33" lengthAdjust="spacingAndGlyphs">105,30</text>
<text x="1393.4" y="308" textLength="33" lengthAdjust="spacingAndGlyphs">105,25</text>
<text x="1393.4" y="332" textLength="33" lengthAdjust="spacingAndGlyphs">105,20</text>
<text x="1393.4" y="355" textLength="33" lengthAdjust="spacingAndGlyphs">105,15</text>
<text x="1393.4" y="379" textLength="33" lengthAdjust="spacingAndGlyphs">105,10</text>
<text x="1393.4" y="402" textLength="33" lengthAdjust="spacingAndGlyphs">105,05</text>
<text x="1393.4" y="426" textLength="33" lengthAdjust="spacingAndGlyphs">105,00</text>
<text x="1393.4" y="449" textLength="33" lengthAdjust="spacingAndGlyphs">104,95</text>
<text x="1393.4" y="473" textLength="33" lengthAdjust="spacingAndGlyphs">104,90</text>
<text x="1393.4" y="497" textLength="33" lengthAdjust="spacingAndGlyphs">104,85</text>
<text x="1393.4" y="520" textLength="33" lengthAdjust="spacingAndGlyphs">104,80</text>
<text x="1393.4" y="544" textLength="33" lengthAdjust="spacingAndGlyphs">104,75</text>
<text x="1393.4" y="567" textLength="33" lengthAdjust="spacingAndGlyphs">104,70</text>
<text x="1393.4" y="591" textLength="33" lengthAdjust="spacingAndGlyphs">104,65</text>
<text x="1393.4" y="614" textLength="33" lengthAdjust="spacingAndGlyphs">104,60</text>
<text x="1394.5" y="677">0</text>
<text x="1394.5" y="695">10</text>
<text x="1394.5" y="720.5">5</text>
<text x="1394.5" y="745.7">0</text>
<text x="1394.5" y="771">-5</text>
<text x="1394.5" y="796.7">-10</text>
</g>
<g shape-rendering="crispEdges">
<rect x="1386" y="673" width="7" height="1" fill="#000"/>
<rect x="1386" y="691" width="7" height="1" fill="#000"/>
<rect x="1386" y="716" width="7" height="1" fill="#000"/>
<rect x="1386" y="742" width="7" height="1" fill="#000"/>
<rect x="1386" y="767" width="7" height="1" fill="#000"/>
<rect x="1386" y="793" width="7" height="1" fill="#000"/>
</g>
<polygon points="1388,129 1394,122.8 1429,122.8 1429,135.2 1394,135.2" fill="#fff" stroke="#000" stroke-width="1"/>
<text x="1393.5" y="133" font-size="11" fill="#000" font-family="Liberation Sans, sans-serif" textLength="33" lengthAdjust="spacingAndGlyphs">105,62</text>
<polygon points="1388,204 1394,197.8 1429,197.8 1429,210.2 1394,210.2" fill="#000" stroke="#000" stroke-width="1"/>
<text x="1393.5" y="208" font-size="11" fill="#fff" font-family="Liberation Sans, sans-serif" textLength="33" lengthAdjust="spacingAndGlyphs">105,46</text>
<polygon points="1388,233 1394,226.8 1429,226.8 1429,239.2 1394,239.2" fill="#FFFF00" stroke="#000" stroke-width="1"/>
<text x="1393.5" y="237" font-size="11" fill="#000" font-family="Liberation Sans, sans-serif" textLength="33" lengthAdjust="spacingAndGlyphs">105,40</text>
<polygon points="1388,275 1394,268.8 1429,268.8 1429,281.2 1394,281.2" fill="#0000FF" stroke="#0000FF" stroke-width="1"/>
<text x="1393.5" y="279" font-size="11" fill="#fff" font-family="Liberation Sans, sans-serif" textLength="33" lengthAdjust="spacingAndGlyphs">105,31</text>
<polygon points="1388,483 1394,476.8 1435.5,476.8 1435.5,489.2 1394,489.2" fill="#E0E0E0" stroke="#000" stroke-width="1"/>
<text x="1393.5" y="487" font-size="11" fill="#000" font-family="Liberation Sans, sans-serif" textLength="33" lengthAdjust="spacingAndGlyphs">104,87</text>
<polygon points="1387.5,624.5 1392.5,618.5 1401.5,618.5 1401.5,630.5 1392.5,630.5" fill="#FF0000" stroke="#800000" stroke-width="1"/>
<text x="1393.6" y="628.5" font-size="11" fill="#fff" font-family="Liberation Sans, sans-serif">1</text>
<polygon points="1387.5,719.5 1393.5,713.5 1411,713.5 1411,725.5 1393.5,725.5" fill="#FF0000" stroke="#800000" stroke-width="1"/>
<text x="1394" y="723.5" font-size="11" fill="#fff" font-family="Liberation Sans, sans-serif">3,0</text>
<polygon points="1387.5,726.5 1393.5,720.5 1416,720.5 1416,732.5 1393.5,732.5" fill="#FFFF00" stroke="#000" stroke-width="1"/>
<text x="1394.0" y="730.5" font-size="11" fill="#000" font-family="Liberation Sans, sans-serif" textLength="21" lengthAdjust="spacingAndGlyphs">3,05</text>
<rect x="0" y="741" width="1386" height="1" fill="#FF0000" shape-rendering="crispEdges"/>
<polyline points="18.75,788.25 30,785 42.5,783.75 57.5,785 75,787 88.75,789.25 98.75,789.25 110,786.75 127.5,781.25 140,780 150,778 160,775 177.5,771.5 190,770.25 198.75,768.5 208.75,764.5 220,756.25 240,744.5 257.5,732 275,720 292.5,710 307.5,704.25 320,701.25 328.75,700.5 338.75,701.5 350,706.25 360,712 377.5,721.5 390,726.25 400,728.75 410,728.75 420,726.5 430,722 447.5,716.75 467.5,712.5 477.5,714.5 490,714.5 500,713.5 510,714.75 520,713.5 532.5,710.5 547.5,705.5 558.75,703.5 570,704.5 585,707.5 597.5,710 610,711.5 627.5,712 640,710.5 652.5,705.5 667.5,697 680,692 690,692 705,697.5 727.5,707 745,717.5 758.75,722.5 780,720.5 790,718.5 805,717.5 820,718.25 835,721.25 855,730 877.5,740 888.75,741.75 902.5,740 920,733.75 940,728 957.5,726.25 970,726.5 990,728 1010,726.75 1025,727.5 1046,730.2 1066.7,734.8 1081,734.25 1101.7,733 1128,728.4 1157,727.25 1177.5,725.2 1198,720.8 1209.6,716.75 1224,715 1241.7,718 1259,721.4 1276.7,718.5 1291,713.5 1303,712 1317.5,713.5 1329,712.4 1340.8,713.8 1352.5,718 1359.8,723.2 1368.5,726" fill="none" stroke="#FFFF00" stroke-width="2" stroke-linejoin="miter" stroke-linejoin="round"/>
<polyline points="18.75,802.5 70,801.5 87.5,800 107.5,797.5 130,793.75 150,790.5 170,787 190,784 220,779.5 250,774.5 275,769.5 297.5,765 317.5,759.5 337.5,753.75 360,745.5 377.5,738.25 398.75,731.25" fill="none" stroke="#0000FF" stroke-width="3.2" stroke-linejoin="miter" stroke-linejoin="round" stroke-linecap="butt"/>
<polyline points="398.75,731.25 427.5,723" fill="none" stroke="#FF0000" stroke-width="3.2" stroke-linejoin="miter" stroke-linejoin="round" stroke-linecap="butt"/>
<polyline points="427.5,723 447.5,716.75 468.75,712" fill="none" stroke="#0000FF" stroke-width="3.2" stroke-linejoin="miter" stroke-linejoin="round" stroke-linecap="butt"/>
<polyline points="468.75,712 480,710 500,708.25 510,708.25 522.5,707.25 538.75,708.5" fill="none" stroke="#FF0000" stroke-width="3.2" stroke-linejoin="miter" stroke-linejoin="round" stroke-linecap="butt"/>
<polyline points="538.75,708.5 557.5,709.5 577.5,710.5 597.5,711.5 608.75,711.5" fill="none" stroke="#0000FF" stroke-width="3.2" stroke-linejoin="miter" stroke-linejoin="round" stroke-linecap="butt"/>
<polyline points="608.75,711.5 627.5,712.25" fill="none" stroke="#FF0000" stroke-width="3.2" stroke-linejoin="miter" stroke-linejoin="round" stroke-linecap="butt"/>
<polyline points="627.5,712.25 690,712.25 705,711.5 728.75,709.5" fill="none" stroke="#0000FF" stroke-width="3.2" stroke-linejoin="miter" stroke-linejoin="round" stroke-linecap="butt"/>
<polyline points="728.75,709.5 755,708.25 780,706.75 805,706.75 820,708.25 837.5,708.5 860,711 887.5,713.25 905,717 920,718.75 940,722.5 955,724.5 968.75,726.5" fill="none" stroke="#FF0000" stroke-width="3.2" stroke-linejoin="miter" stroke-linejoin="round" stroke-linecap="butt"/>
<polyline points="968.75,726.5 990,729 1015,732 1046,735.4 1066.7,736.6 1107.5,736 1136.7,735.4 1165.8,734 1195,733 1224,732 1253,730.2 1282.5,728.1 1311.7,726 1329,724.3 1340.8,724 1358.3,722.6" fill="none" stroke="#0000FF" stroke-width="3.2" stroke-linejoin="miter" stroke-linejoin="round" stroke-linecap="butt"/>
<polyline points="1358.3,722.6 1368.5,721.7" fill="none" stroke="#FF0000" stroke-width="3.2" stroke-linejoin="miter" stroke-linejoin="round" stroke-linecap="butt"/>
<g shape-rendering="crispEdges">
<rect x="18" y="809" width="1" height="6" fill="#000"/>
<rect x="78" y="809" width="1" height="6" fill="#000"/>
<rect x="138" y="809" width="1" height="6" fill="#000"/>
<rect x="198" y="809" width="1" height="6" fill="#000"/>
<rect x="258" y="809" width="1" height="6" fill="#000"/>
<rect x="318" y="809" width="1" height="6" fill="#000"/>
<rect x="378" y="809" width="1" height="6" fill="#000"/>
<rect x="438" y="809" width="1" height="6" fill="#000"/>
<rect x="498" y="809" width="1" height="6" fill="#000"/>
<rect x="558" y="809" width="1" height="6" fill="#000"/>
<rect x="618" y="809" width="1" height="6" fill="#000"/>
<rect x="678" y="809" width="1" height="6" fill="#000"/>
<rect x="738" y="809" width="1" height="6" fill="#000"/>
<rect x="798" y="809" width="1" height="6" fill="#000"/>
<rect x="858" y="809" width="1" height="6" fill="#000"/>
<rect x="918" y="809" width="1" height="6" fill="#000"/>
<rect x="978" y="809" width="1" height="6" fill="#000"/>
<rect x="1038" y="809" width="1" height="6" fill="#000"/>
<rect x="1098" y="809" width="1" height="6" fill="#000"/>
<rect x="1118" y="809" width="1" height="6" fill="#000"/>
<rect x="1188" y="809" width="1" height="6" fill="#000"/>
<rect x="1248" y="809" width="1" height="6" fill="#000"/>
<rect x="1308" y="809" width="1" height="6" fill="#000"/>
<rect x="1368" y="809" width="1" height="6" fill="#000"/>
</g>
<g font-family="Liberation Sans, sans-serif" font-size="11" fill="#000" text-anchor="middle">
<text x="17" y="826" textLength="26.800" lengthAdjust="spacingAndGlyphs">21:02</text>
<text x="77" y="826" textLength="26.800" lengthAdjust="spacingAndGlyphs">21:13</text>
<text x="137" y="826" textLength="26.800" lengthAdjust="spacingAndGlyphs">21:24</text>
<text x="197" y="826" textLength="26.800" lengthAdjust="spacingAndGlyphs">21:46</text>
<text x="257" y="826" textLength="26.800" lengthAdjust="spacingAndGlyphs">21:53</text>
<text x="317" y="826" textLength="26.800" lengthAdjust="spacingAndGlyphs">21:53</text>
<text x="377" y="826" textLength="26.800" lengthAdjust="spacingAndGlyphs">21:59</text>
<text x="437" y="826" textLength="26.800" lengthAdjust="spacingAndGlyphs">22:01</text>
<text x="497" y="826" textLength="26.800" lengthAdjust="spacingAndGlyphs">22:06</text>
<text x="557" y="826" textLength="26.800" lengthAdjust="spacingAndGlyphs">22:10</text>
<text x="617" y="826" textLength="26.800" lengthAdjust="spacingAndGlyphs">22:16</text>
<text x="677" y="826" textLength="26.800" lengthAdjust="spacingAndGlyphs">22:22</text>
<text x="737" y="826" textLength="26.800" lengthAdjust="spacingAndGlyphs">22:24</text>
<text x="797" y="826" textLength="26.800" lengthAdjust="spacingAndGlyphs">22:26</text>
<text x="857" y="826" textLength="26.800" lengthAdjust="spacingAndGlyphs">22:27</text>
<text x="917" y="826" textLength="26.800" lengthAdjust="spacingAndGlyphs">22:29</text>
<text x="977" y="826" textLength="26.800" lengthAdjust="spacingAndGlyphs">22:35</text>
<text x="1037" y="826" textLength="26.800" lengthAdjust="spacingAndGlyphs">23:11</text>
<text x="1117" y="826">7/1</text>
<text x="1187" y="826" textLength="26.800" lengthAdjust="spacingAndGlyphs">01:04</text>
<text x="1247" y="826" textLength="26.800" lengthAdjust="spacingAndGlyphs">02:00</text>
<text x="1307" y="826" textLength="26.800" lengthAdjust="spacingAndGlyphs">02:01</text>
<text x="1367" y="826" textLength="26.800" lengthAdjust="spacingAndGlyphs">02:15</text>
</g>
<rect x="554" y="815" width="45.500" height="13" fill="#D3D3D3"/>
<text x="555.300" y="826" font-family="Liberation Sans, sans-serif" font-size="11" fill="#000" textLength="41.500" lengthAdjust="spacingAndGlyphs">22:10:16</text>
<g font-family="Liberation Sans, sans-serif" font-size="11" fill="#000">
<text x="2.7" y="63" textLength="82.3" lengthAdjust="spacingAndGlyphs">KPFast2Color(CL</text>
<text x="89.3" y="63" textLength="25.7" lengthAdjust="spacingAndGlyphs">08-14</text>
<text x="120.7" y="63" textLength="10.0" lengthAdjust="spacingAndGlyphs">(4</text>
<text x="136" y="63" textLength="60.7" lengthAdjust="spacingAndGlyphs">Range),Color</text>
<text x="202.7" y="63" textLength="100.6" lengthAdjust="spacingAndGlyphs">[LightSteelBlue],Color</text>
<text x="308.3" y="63" textLength="58.4" lengthAdjust="spacingAndGlyphs">[DarkGray]),</text>
<text x="371.7" y="63" textLength="83.3" lengthAdjust="spacingAndGlyphs">KPPivot2Color(CL</text>
<text x="460.7" y="63" textLength="26.0" lengthAdjust="spacingAndGlyphs">08-14</text>
<text x="493.3" y="63" textLength="10.0" lengthAdjust="spacingAndGlyphs">(4</text>
<text x="508.3" y="63" textLength="108.4" lengthAdjust="spacingAndGlyphs">Range),True,True,3,0),</text>
<text x="621.7" y="63" textLength="102.3" lengthAdjust="spacingAndGlyphs">KPScoreCardColor(CL</text>
<text x="729.3" y="63" textLength="25.7" lengthAdjust="spacingAndGlyphs">08-14</text>
<text x="761.7" y="63" textLength="10.0" lengthAdjust="spacingAndGlyphs">(4</text>
<text x="776.7" y="63" textLength="61.6" lengthAdjust="spacingAndGlyphs">Range),Color</text>
<text x="846" y="63" textLength="51.3" lengthAdjust="spacingAndGlyphs">[Red],Color</text>
<text x="902.7" y="63" textLength="92.3" lengthAdjust="spacingAndGlyphs">[Transparent],Color</text>
<text x="1000" y="63" textLength="66.0" lengthAdjust="spacingAndGlyphs">[Yellow],Color</text>
<text x="1071.7" y="63" textLength="57.6" lengthAdjust="spacingAndGlyphs">[Blue],True),</text>
<text x="1135" y="63" textLength="61.7" lengthAdjust="spacingAndGlyphs">KPMWAP(CL</text>
<text x="1202.7" y="63" textLength="25.6" lengthAdjust="spacingAndGlyphs">08-14</text>
<text x="1234" y="63" textLength="10.0" lengthAdjust="spacingAndGlyphs">(4</text>
<text x="1249.3" y="63" textLength="45.7" lengthAdjust="spacingAndGlyphs">Range),3)</text>
<text x="2.7" y="638.5" textLength="71.3" lengthAdjust="spacingAndGlyphs">KPMRange(CL</text>
<text x="80" y="638.5" textLength="28.3" lengthAdjust="spacingAndGlyphs">08-14</text>
<text x="113.3" y="638.5" textLength="9.4" lengthAdjust="spacingAndGlyphs">(4</text>
<text x="126" y="638.5" textLength="31.3" lengthAdjust="spacingAndGlyphs">Range))</text>
<text x="2.7" y="701.7" textLength="63.0" lengthAdjust="spacingAndGlyphs">KPTrend2(CL</text>
<text x="70" y="701.7" textLength="26.7" lengthAdjust="spacingAndGlyphs">08-14</text>
<text x="101.7" y="701.7" textLength="10.0" lengthAdjust="spacingAndGlyphs">(4</text>
<text x="115" y="701.7" textLength="82.3" lengthAdjust="spacingAndGlyphs">Range),30,20,10)</text>
<text x="2.7" y="806.7" textLength="9.0" lengthAdjust="spacingAndGlyphs">©</text>
<text x="14" y="806.7" textLength="22.7" lengthAdjust="spacingAndGlyphs">2014</text>
<text x="40.7" y="806.7" textLength="56.0" lengthAdjust="spacingAndGlyphs">NinjaTrader,</text>
<text x="101.7" y="806.7" textLength="18.3" lengthAdjust="spacingAndGlyphs">LLC</text>
</g>
<defs><linearGradient id="wm" x1="0" y1="0" x2="0" y2="1"><stop offset="0" stop-color="#6a0008"/><stop offset=".5" stop-color="#e81424"/><stop offset="1" stop-color="#5a0006"/></linearGradient></defs>
<g font-family="Liberation Serif, serif" font-weight="bold" fill="url(#wm)" stroke="#1c0000" paint-order="stroke" stroke-linejoin="round">
<g font-size="25.5" stroke-width="2.6" style="filter:drop-shadow(1.5px 1.5px 0.6px rgba(60,30,0,.55))">
<text x="1016.5" y="775.6" textLength="60.5" lengthAdjust="spacingAndGlyphs">WWW.</text>
<text x="1079" y="775.6" textLength="100.5" lengthAdjust="spacingAndGlyphs">TRADERS</text>
<text x="1181.5" y="775.6" textLength="5.5" lengthAdjust="spacingAndGlyphs">-</text>
<text x="1189" y="775.6" textLength="118.0" lengthAdjust="spacingAndGlyphs">SOFTWARE</text>
<text x="1309" y="775.6" textLength="50.0" lengthAdjust="spacingAndGlyphs">.COM</text>
</g><g font-size="12.2" stroke-width="1.7" style="filter:drop-shadow(1px 1px 0.5px rgba(60,30,0,.55))">
<text x="1016.5" y="792.5" textLength="180.0" lengthAdjust="spacingAndGlyphs">ANDREYBBRV@GMAIL.COM</text>
<text x="1210" y="792.5" textLength="47.5" lengthAdjust="spacingAndGlyphs">SKYPE:</text>
<text x="1264" y="792.5" textLength="93.0" lengthAdjust="spacingAndGlyphs">ANDREYBBRV</text>
</g></g>
</svg><div id="dlg" class="abs">
<div class="fr"></div><div class="abs" style="left:0;top:0;right:0;bottom:0;border:1px solid;border-color:#f2f7fc #86d6f4 #86d6f4 #f2f7fc;pointer-events:none"></div><div class="title">Indicators</div>
<div class="abs" style="left:554px;top:9px;width:13px;height:13px;box-sizing:border-box;border:1px solid #4a1620;border-radius:2.5px;background:linear-gradient(#eebcae 0,#e4a090 45%,#c8502c 50%,#dc8466 100%);box-shadow:inset 0 0 0 1px rgba(255,225,215,.75);"><svg class="abs" style="left:2px;top:2px" width="7" height="7" viewBox="0 0 7 7"><path d="M1.200 1.200 L5.800 5.800 M5.800 1.200 L1.200 5.800" stroke="#3a4658" stroke-width="2.600" stroke-linecap="round"/><path d="M1.200 1.200 L5.800 5.800 M5.800 1.200 L1.200 5.800" stroke="#fff" stroke-width="1.300" stroke-linecap="round"/></svg></div>
<div id="cl" style="left:7px;top:25px;width:562px;height:446px;">
<div class="abs" style="left:0;top:0;width:562px;height:380px;box-sizing:border-box;border:1px solid;border-color:#8a8a8a #fff #fff #8a8a8a"></div>
<div class="lb" style="left:1px;top:1px;width:272px;height:213px;border-width:2px 1px 1px 2px;border-color:#6c6c6c #828ea0 #828ea0 #6c6c6c;">
<div class="li" style="left:3px;top:2px;letter-spacing:-0.1px">&nbsp;Nison Candle Scanner</div>
<div class="li" style="left:3px;top:15px;letter-spacing:-0.3px">ADL</div>
<div class="li" style="left:3px;top:28px;letter-spacing:-0.2px">ADX</div>
<div class="li" style="left:3px;top:41px;letter-spacing:-0.2px">ADXR</div>
<div class="li" style="left:3px;top:54px;letter-spacing:-0.2px">AnaMas</div>
<div class="li" style="left:3px;top:67px;letter-spacing:-0.3px">APZ</div>
<div class="li" style="left:3px;top:80px;letter-spacing:-0.2px">Aroon</div>
<div class="li" style="left:3px;top:93px;letter-spacing:-0.35px">AroonOscillator</div>
<div class="li" style="left:3px;top:106px;letter-spacing:-0.07px">ATNMovingMedian</div>
<div class="li" style="left:3px;top:119px;letter-spacing:-0.25px">ATNOrdersSingle</div>
<div class="li" style="left:3px;top:132px;letter-spacing:-0.1px">ATNPostionInfo</div>
<div class="li" style="left:3px;top:145px;letter-spacing:-0.14px">ATNSignalTrader</div>
<div class="li" style="left:3px;top:158px;letter-spacing:0px">ATNStopTarget</div>
<div class="li" style="left:3px;top:171px;letter-spacing:-0.23px">ATNSuperTrendM1</div>
<div class="li" style="left:3px;top:184px;letter-spacing:-0.1px">ATNswingTrend</div>
<div class="li" style="left:3px;top:197px;letter-spacing:-0.3px">ATR</div>
<div class="abs" style="left:252px;top:0;width:17px;height:210px;background:#f0f0f0;"></div>
<svg class="abs" style="left:257px;top:8px" width="7" height="4"><path d="M0 4h7l-3.500-4z" fill="#202020"/></svg>
<svg class="abs" style="left:257px;top:199px" width="7" height="4"><path d="M0 0h7l-3.500 4z" fill="#404040"/></svg>
<div class="abs" style="left:252px;top:19px;width:15px;height:15px;box-sizing:border-box;border:1px solid #979797;border-radius:2px;background:linear-gradient(90deg,#f5f5f5,#dcdcdc)"></div>
</div>
<div class="lb" style="left:1px;top:218px;width:272px;height:120px;border-width:1px 1px 1px 2px;border-color:#828ea0 #828ea0 #828ea0 #6c6c6c;overflow:hidden">
<div class="abs" style="left:1px;top:1px;width:267px;height:13px;background:#3399FF;"></div>
<div class="li" style="left:3px;top:2px;letter-spacing:-0.285px;color:#fff;">KPFast2Color(CL 08-14 (4 Range),Color [LightSteelBlue]</div>
<div class="li" style="left:3px;top:15px;letter-spacing:-0.217px;">KPPivot2Color(CL 08-14 (4 Range),True,True,3,0)</div>
<div class="li" style="left:3px;top:28px;letter-spacing:-0.296px;">KPScoreCardColor(CL 08-14 (4 Range),Color [Red],Colo</div>
<div class="li" style="left:3px;top:41px;letter-spacing:-0.2px;">KPTrend2(CL 08-14 (4 Range),30,20,10)</div>
<div class="li" style="left:3px;top:54px;letter-spacing:-0.22px;">KPMWAP(CL 08-14 (4 Range),3)</div>
<div class="li" style="left:3px;top:67px;letter-spacing:-0.25px;">KPMRange(CL 08-14 (4 Range))</div>
</div>
<div class="btn" style="left:27px;top:349px;width:66px;height:23px;color:#9a9a9a;border-color:#b5b5b5;background:#f2f2f2">New</div>
<div class="btn" style="left:180px;top:349px;width:66px;height:23px;">Remove</div>
<div class="btn" style="left:89px;top:410px;width:79px;height:23px;border-color:#2c628b;box-shadow:inset 0 0 0 1px #48c7f2,inset 0 0 0 2px rgba(255,255,255,.6);">OK</div>
<div class="btn" style="left:242px;top:410px;width:78px;height:23px;">Apply</div>
<div class="btn" style="left:395px;top:410px;width:78px;height:23px;">Close</div>
<div class="abs" style="left:281px;top:1px;width:279px;height:1px;background:#a8a8a8"></div>
<div class="abs" style="left:560px;top:1px;width:2px;height:378px;background:#fff"></div>
<div class="abs" style="left:281px;top:2px;width:279px;height:315px;box-sizing:border-box;border-left:1px solid #a0a0a0;border-bottom:1px solid #a0a0a0;background:#fff;">
<div class="abs" style="left:-1px;top:0;width:279px;height:242px;background:#c8c8c8"></div>
<div class="row" style="left:-1px;top:2px">
<div class="pm"></div><div class="cat">Parameters</div>
</div>
<div class="row" style="left:-1px;top:18px">
<div class="pn" style="">LongColor</div>
<div class="pv" style="padding-left:29px"><div class="sw" style="background:#B0C4DE"></div>LightSteelBlue</div>
</div>
<div class="row" style="left:-1px;top:34px">
<div class="pn" style="">ShortColor</div>
<div class="pv" style="padding-left:29px"><div class="sw" style="background:#A9A9A9"></div>DarkGray</div>
</div>
<div class="row" style="left:-1px;top:50px">
<div class="pm"></div><div class="cat">Data</div>
</div>
<div class="row" style="left:-1px;top:66px">
<div class="pn" style="">Calculate on bar close</div>
<div class="pv">True</div>
</div>
<div class="row" style="left:-1px;top:82px">
<div class="pn" style="">Input series</div>
<div class="pv">CL 08-14 (4 Range)</div>
</div>
<div class="row" style="left:-1px;top:98px">
<div class="pn" style="">Maximum bars look back</div>
<div class="pv">TwoHundredFiftySix</div>
</div>
<div class="row" style="left:-1px;top:114px">
<div class="pm"></div><div class="cat">Visual</div>
</div>
<div class="row" style="left:-1px;top:130px">
<div class="pn" style="">Auto scale</div>
<div class="pv">True</div>
</div>
<div class="row" style="left:-1px;top:146px">
<div class="pn" style="">Displacement</div>
<div class="pv">0</div>
</div>
<div class="row" style="left:-1px;top:162px">
<div class="pn" style="">Display in Data Box</div>
<div class="pv">False</div>
</div>
<div class="row" style="left:-1px;top:178px">
<div class="pn" style="background:#c8c8c8;">Label</div>
<div class="pv">KPFast2Color</div>
</div>
<div class="row" style="left:-1px;top:194px">
<div class="pn" style="">Panel</div>
<div class="pv">Same as input series</div>
</div>
<div class="row" style="left:-1px;top:210px">
<div class="pn" style="">Price marker(s)</div>
<div class="pv">False</div>
</div>
<div class="row" style="left:-1px;top:226px">
<div class="pn" style="">Scale justification</div>
<div class="pv">Right</div>
</div>
</div>
<div class="abs" style="left:281px;top:320px;width:280px;height:59px;box-sizing:border-box;border:1px solid #a0a0a0;background:#f0f0f0;"><div class="abs" style="left:4px;top:2px;font-weight:bold;line-height:14px;letter-spacing:.3px">Label</div><div class="abs" style="left:4px;top:17px;line-height:14px;letter-spacing:-.15px">Kwik*POP Fast2Color</div></div>
<svg class="abs" style="left:551px;top:435px" width="11" height="11" viewBox="0 0 11 11"><g fill="#c4c4c4"><rect x="8" y="8" width="2" height="2"/><rect x="8" y="4" width="2" height="2"/><rect x="4" y="8" width="2" height="2"/><rect x="8" y="0" width="2" height="2"/><rect x="4" y="4" width="2" height="2"/><rect x="0" y="8" width="2" height="2"/></g></svg>
</div></div>
<div class="abs" style="left:0;top:836px;width:1440px;height:24px;background:linear-gradient(#f3f3f3,#ececec);border-top:1px solid #fff;box-sizing:border-box"></div>
<svg class="abs" style="left:5px;top:843.500px" width="4.500" height="8"><path d="M4.500 0v8L0 4z" fill="#333"/></svg>
<svg class="abs" style="left:1430px;top:843.500px" width="4.500" height="8"><path d="M0 0v8l4.500-4z" fill="#333"/></svg>
<div class="abs" style="left:1375px;top:837px;width:47px;height:22px;box-sizing:border-box;border:1px solid #9a9a9a;border-radius:3px;background:linear-gradient(#f4f4f4 0,#e9e9e9 48%,#d9d9d9 52%,#d0d0d0 100%)"><div class="abs" style="left:19px;top:6px;width:1px;height:8px;background:#444;box-shadow:3px 0 0 #444,6px 0 0 #444"></div></div><div id="task" class="abs">
<div class="abs" style="left:1165px;top:0;width:275px;height:39px;background:linear-gradient(90deg,rgba(132,151,174,0),#8497ae 34px)"></div>
<!-- start orb -->
<svg class="abs" style="left:7px;top:-1px" width="40" height="40" viewBox="0 0 40 40"><defs><radialGradient id="orb" cx="50%" cy="95%" r="95%"><stop offset="0" stop-color="#36d0ff"/><stop offset=".28" stop-color="#1a86d8"/><stop offset=".6" stop-color="#1a56a8"/><stop offset="1" stop-color="#2a4f88"/></radialGradient><linearGradient id="orbh" x1="0" y1="0" x2="0" y2="1"><stop offset="0" stop-color="#fff" stop-opacity=".55"/><stop offset="1" stop-color="#fff" stop-opacity=".05"/></linearGradient></defs><circle cx="20" cy="20.500" r="18.500" fill="#1c3c70"/><circle cx="20" cy="20.500" r="17.500" fill="url(#orb)" stroke="#9ccdf0" stroke-width=".8" stroke-opacity=".7"/><path d="M3.500 17 A16.500 16.500 0 0 1 36.500 17 Q20 23 3.500 17Z" fill="url(#orbh)"/><path d="M12.800 13.300 q3.700-2.600 7.300-0.600 l-1.600 7.200 q-3.800-1.800-7.400 0.800z" fill="#f2622a"/><path d="M21.600 13 q3.800 2 7.700-1.200 l-1.700 7.400 q-3.900 3-7.600 1z" fill="#86c83a"/><path d="M10.700 22.500 q3.700-2.700 7.400-0.800 l-1.600 7 q-3.800-1.900-7.400 0.900z" fill="#3aa8f0"/><path d="M19.500 22.300 q3.800 1.900 7.600-1.100 l-1.600 7.200 q-3.900 3-7.600 1z" fill="#fcc42a"/></svg>
<!-- explorer folder -->
<svg class="abs" style="left:72px;top:4px" width="34" height="30" viewBox="0 0 34 30"><path d="M2 6 h10 l2 3 h17 v17 h-29z" fill="#f3d98a" stroke="#c9a646"/><path d="M2 11 h29 v15 h-29z" fill="#fbeab0" stroke="#d2b050"/><path d="M3 4 q0-2.500 2.500-2.500 h9 q2 0 2.500 2 h5 q2 0 2.500 2 h4 q2 0 2 2 v2 h-28z" fill="#f1dc98" stroke="#c9a646" stroke-width=".8"/><rect x="8" y="2.300" width="6" height="2" fill="#fff"/><rect x="16" y="4.300" width="6" height="2" fill="#fff"/><rect x="23" y="6.300" width="6" height="2" fill="#fff"/><rect x="5" y="2.300" width="3" height="2" fill="#22b83a"/><rect x="13.500" y="4.300" width="3" height="2" fill="#e03a30"/><rect x="21" y="6.300" width="3" height="2" fill="#2a8fe0"/><path d="M6 29 v-8 q0-3 3-3 h14 q3 0 3 3 v8 h-5 v-5 h-10 v5z" fill="#8fc8f0" stroke="#3a8ad0"/></svg>
<!-- search doc -->
<svg class="abs" style="left:134px;top:3px" width="30" height="34" viewBox="0 0 30 34"><path d="M6 1.500 h14 l7 7 v22.500 h-21z" fill="#fdfdfd" stroke="#a8a8a8"/><path d="M20 1.500 v7 h7z" fill="#e4e4e4" stroke="#a8a8a8" stroke-width=".8"/><path d="M27.500 9 v22.500 h-20" fill="none" stroke="#8a8a8a" stroke-opacity=".5"/><path d="M10.500 22.500 L3.500 30" stroke="#b86800" stroke-width="5.200" stroke-linecap="round"/><path d="M10.500 22.500 L3.500 30" stroke="#f59a18" stroke-width="3.600" stroke-linecap="round"/><circle cx="15.500" cy="17" r="7" fill="none" stroke="#b86800" stroke-width="4.400"/><circle cx="15.500" cy="17" r="7" fill="none" stroke="#f59a18" stroke-width="3"/></svg>
<!-- chrome -->
<svg class="abs" style="left:198px;top:4px" width="30" height="30" viewBox="0 0 30 30"><g transform="rotate(-14 15 15)"><circle cx="15" cy="15" r="14" fill="#e33b2e"/><path d="M15 15 L2.900 8 A14 14 0 0 0 9 27.600 L15 15z" fill="#2ea64a"/><path d="M15 15 L9 27.600 A14 14 0 0 0 29 15 Z" fill="#fcd116"/><path d="M15 15 L29 15 A14 14 0 0 0 27 8 L15 8z" fill="#e33b2e"/></g><circle cx="15" cy="15" r="6.500" fill="#fff"/><circle cx="15" cy="15" r="5.200" fill="#3a80d8"/></svg>
<!-- notepad -->
<svg class="abs" style="left:258px;top:2px" width="34" height="34" viewBox="0 0 34 34"><path d="M3 5 l14-2.500 l3 2.500 l3.500-0.500 l6.500 23 l-24 5z" fill="#9a9a9a" opacity=".45" transform="translate(.8,.8)"/><path d="M2.500 4.500 l14-2.500 l3 2.500 l3.500-0.500 l6.500 23.500 l-24 4.500z" fill="#f1f1ef" stroke="#b4b4b4" stroke-width=".7"/><path d="M4.500 7l12-2M4.800 9l13-2.200M5 11l8-1.400M5.500 14l13-2.200M5.800 16l13-2.200M6 18l11-1.900M6.500 21l8-1.400" stroke="#9c9c9c" stroke-width=".8"/><path d="M10 22.500 L26.500 4.500 L29.200 7 L12.700 25 L9 26.300z" fill="#f4a81e" stroke="#9a6410" stroke-width=".6"/><path d="M24.700 6.500l2.700 2.500 1.800-2-2.700-2.500z" fill="#b8b8b8"/><path d="M26.500 4.500l2.700 2.500 1.300-1.400 q.6-.9-.3-1.800 l-.9-.8 q-.9-.6-1.700.2z" fill="#e8646c"/><path d="M9 26.300l1-3.800 2.700 2.500z" fill="#e8d0a8"/><path d="M9 26.300l.4-1.500 1.100 1z" fill="#333"/></svg>
<div class="tbtn" style="left:307px;width:59px"></div>
<div class="tbtn" style="left:370px;width:58px"></div>
<div class="tbtn" style="left:432px;width:58px"></div>
<div class="tbtn" style="left:502px;width:50px;background:#c3d3e8"></div>
<div class="tbtn" style="left:498px;width:50px;background:#c3d3e8"></div>
<div class="tbtn" style="left:494px;width:50px;background:linear-gradient(#e9f0f9 0,#d3e0f0 50%,#c2d3ea 51%,#d0deef 100%)"></div>
<!-- floppy -->
<svg class="abs" style="left:321px;top:3px" width="33" height="34" viewBox="0 0 33 34"><defs><linearGradient id="sl" x1="0" y1="0" x2="1" y2="1"><stop offset="0" stop-color="#f4f4f4"/><stop offset=".5" stop-color="#c4c4c4"/><stop offset="1" stop-color="#ececec"/></linearGradient></defs><path d="M1.500 1 h27 l3 3 v27.500 q0 1 -1 1 h-29 q-1 0 -1 -1 v-29.500 q0 -1 1 -1z" fill="#1243c9"/><path d="M30.500 3.500 v28 h-2 v-30z" fill="#0b2f9c"/><rect x="9" y="1" width="15" height="10.500" fill="url(#sl)"/><rect x="17" y="2" width="4.200" height="7.800" fill="#1243c9"/><rect x="4" y="15" width="23.500" height="15.500" fill="#fff"/><rect x="4" y="30.500" width="23.500" height="1.800" fill="#b0203a"/><path d="M5.300 18.400h21M5.300 22.400h21M5.300 26.400h10.500" stroke="#e0203a" stroke-width="1.100"/><circle cx="25.600" cy="26.400" r=".6" fill="#e0203a"/><text x="16.800" y="28.800" font-size="6.500" font-weight="bold" fill="#555" font-family="Liberation Mono, monospace" textLength="7.500" lengthAdjust="spacingAndGlyphs">64</text><rect x="1.500" y="28" width="1.300" height="1.300" fill="#0a1f60"/><rect x="28.500" y="28" width="1.300" height="1.300" fill="#0a1f60"/></svg>
<!-- ninja -->
<svg class="abs" style="left:384px;top:8.5px" width="30" height="23" viewBox="-1 -1 30 23"><defs><linearGradient id="br1" x1="0" y1="0" x2="1" y2="1"><stop offset="0" stop-color="#a08a72"/><stop offset=".5" stop-color="#8a6e52"/><stop offset="1" stop-color="#b09a84"/></linearGradient></defs><path d="M10 21 C3 18.500 -1 12.500 1.500 6.500 C3.500 2 7.500 0.300 11 0.800 L16 20.100 L9.200 14.500 L9.800 5.500 C6 6 3.600 9.500 4 13.500 C4.400 17 7 19.500 10 21Z" fill="url(#br1)"/><path d="M11.900 0.800 L16.100 3.400 L20.300 15 C23 13.500 25 11 25 7.500 C25 4 22 1.300 18.300 -0.200 C24 0 28.500 3.500 28.300 8.500 C28 14.500 23.500 19.500 17.500 20.500 Z" fill="#cf1c24"/><path d="M11.400 0.700 L16.700 20.300" stroke="#f4f4f4" stroke-width=".7"/></svg>
<!-- wordpad -->
<svg class="abs" style="left:448px;top:4px" width="27" height="30" viewBox="0 0 27 30"><path d="M2 1 h21 v18 q0 5 2 8 h-24 q2-4 1-9z" fill="#eef4fc" stroke="#7a9cc8" stroke-width="1"/><path d="M1.500 27 h23.500 v1.500 h-23.500z" fill="#a8c4e6"/><rect x="2" y="1" width="21" height="4.200" fill="#5c86bc"/><rect x="2" y="2" width="21" height="1" fill="#86a8d4"/><text x="3" y="17.200" font-size="15" font-weight="bold" fill="#f58a12" font-family="Liberation Serif, serif">A</text><path d="M14.500 9.500h6M14.500 11.500h6M14.500 13.700h6" stroke="#3a78d8" stroke-width="1.100"/><path d="M4 20.500h16M4 22.500h13M4 24.500h16" stroke="#aab4c0" stroke-width=".9"/></svg>
<svg class="abs" style="left:504px;top:8.5px" width="30" height="23" viewBox="-1 -1 30 23"><defs><linearGradient id="br2" x1="0" y1="0" x2="1" y2="1"><stop offset="0" stop-color="#a08a72"/><stop offset=".5" stop-color="#8a6e52"/><stop offset="1" stop-color="#b09a84"/></linearGradient></defs><path d="M10 21 C3 18.500 -1 12.500 1.500 6.500 C3.500 2 7.500 0.300 11 0.800 L16 20.100 L9.200 14.500 L9.800 5.500 C6 6 3.600 9.500 4 13.500 C4.400 17 7 19.500 10 21Z" fill="url(#br2)"/><path d="M11.900 0.800 L16.100 3.400 L20.300 15 C23 13.500 25 11 25 7.500 C25 4 22 1.300 18.300 -0.200 C24 0 28.500 3.500 28.300 8.500 C28 14.500 23.500 19.500 17.500 20.500 Z" fill="#cf1c24"/><path d="M11.400 0.700 L16.700 20.300" stroke="#f4f4f4" stroke-width=".7"/></svg>
<!-- tray -->
<div class="abs" style="left:1202px;top:9px;font-size:12px;color:#fff;">EN</div>
<svg class="abs" style="left:1233px;top:17px" width="9" height="5"><path d="M0 5h9l-4.500-5z" fill="#fff"/></svg>
<svg class="abs" style="left:1254px;top:12px" width="17" height="17" viewBox="0 0 17 17"><rect width="17" height="17" rx="2" fill="#2a7ae0"/><path d="M2 11 a3 3 0 0 1 3-4 a4 4 0 0 1 7 0 a3 3 0 0 1 3 4z" fill="#f8b010"/><rect x="0" y="13" width="17" height="4" fill="#1a5ac0"/></svg>
<svg class="abs" style="left:1278px;top:12px" width="17" height="17" viewBox="0 0 17 17"><rect width="17" height="17" fill="#0a3a6a"/><text x="8.500" y="14" font-size="15" font-weight="bold" fill="#fff" text-anchor="middle" font-family="Liberation Sans, sans-serif">S</text></svg>
<svg class="abs" style="left:1302px;top:12px" width="18" height="17" viewBox="0 0 18 17"><rect x="5.500" y="3.500" width="11" height="8" fill="#8aa0b8" stroke="#fff"/><path d="M11 12v3M7 15.500h8" stroke="#fff" stroke-width="1.400"/><path d="M3 0v4M1 2h4v4h-4z M3 6v9h4" fill="none" stroke="#fff" stroke-width="1.200"/></svg>
<svg class="abs" style="left:1326px;top:12px" width="17" height="17" viewBox="0 0 17 17"><path d="M1 6h3l4-4v13l-4-4h-3z" fill="#fff" stroke="#ddd" stroke-width=".5"/><path d="M10.500 5.500a4 4 0 0 1 0 6M12.500 3.500a7 7 0 0 1 0 10" fill="none" stroke="#fff" stroke-width="1.200"/></svg>
<div class="abs" style="left:1351px;top:4px;width:70px;text-align:center;font-size:12px;color:#fff;line-height:16px;letter-spacing:-0.4px">2:30<br>01.07.2014</div>
<div class="abs" style="left:1426px;top:0;width:14px;height:39px;background:linear-gradient(90deg,#5a6a80,#8494aa 30%,#6a7a90);border-left:1px solid #3a4658;box-sizing:border-box"></div>
</div>
</body></html>
